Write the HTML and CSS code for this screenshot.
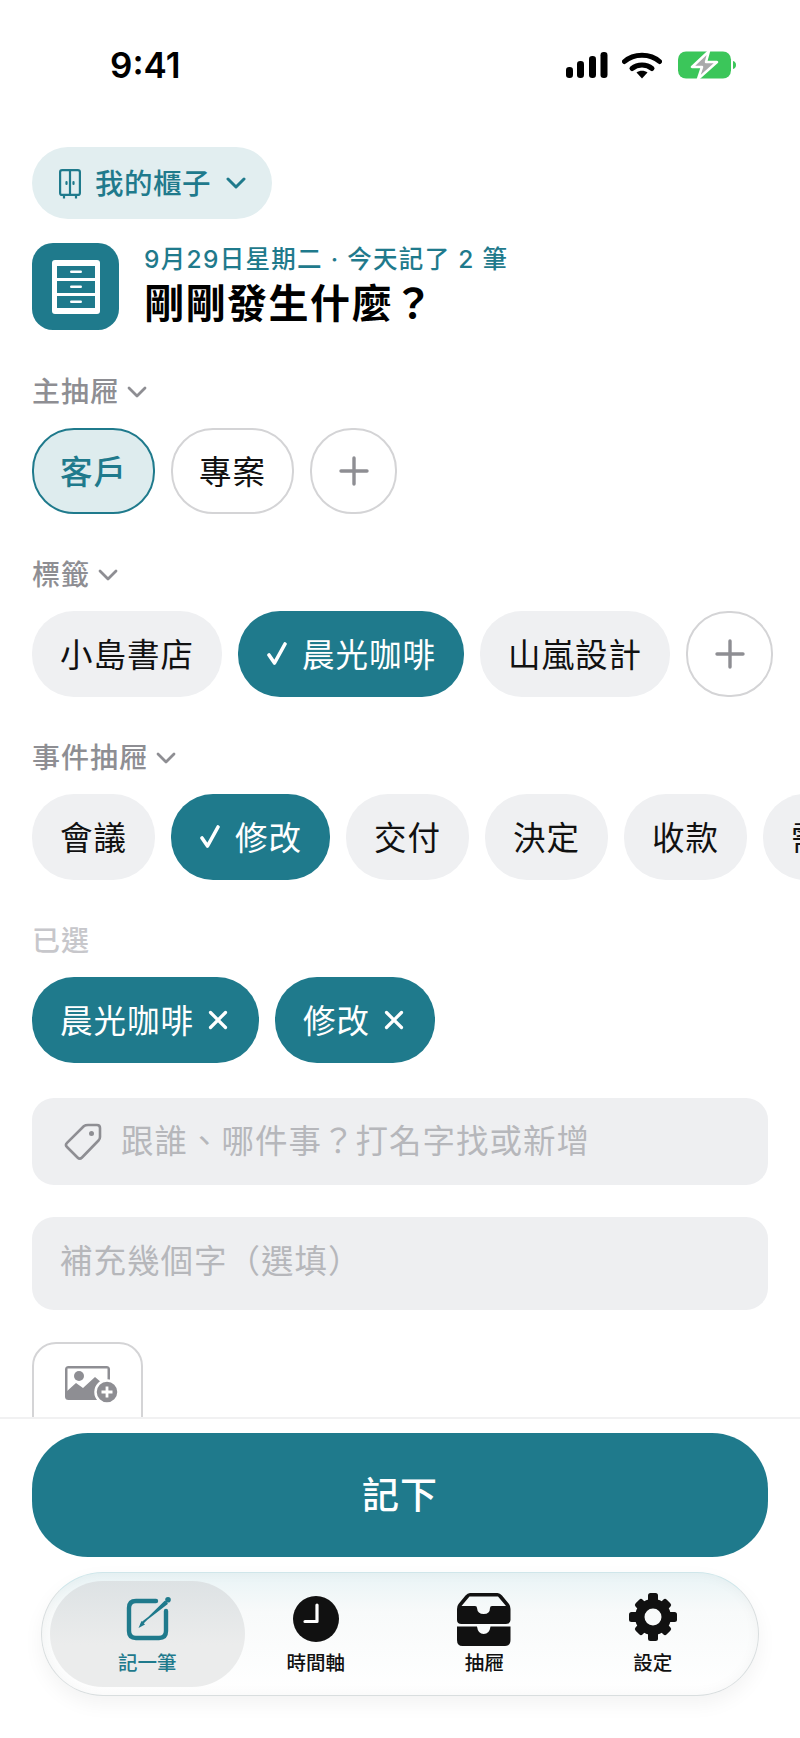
FILE: index.html
```html
<!DOCTYPE html>
<html lang="zh-Hant">
<head>
<meta charset="utf-8">
<title>記一筆</title>
<link rel="stylesheet" href="styles.css">
</head>
<body>
<div class="phone">

<div class="status">
	<span class="time">9:41</span>
	<div class="status-icons">
		<svg width="42" height="28" viewBox="0 0 42 28"><rect x="0" y="16" width="7" height="11" rx="3.2"/><rect x="11" y="10" width="7" height="17" rx="3.2"/><rect x="23" y="5" width="7" height="22" rx="3.2"/><rect x="34.500" y="1" width="7" height="26" rx="3.2"/></svg>
		<svg width="40" height="28" viewBox="0 0 40 28"><path d="M2.500 10.500C11.500 2 28.500 2 37.500 10.500" fill="none" stroke="#000" stroke-width="5" stroke-linecap="round"/><path d="M10 17.500C15.500 12.800 24.500 12.800 30 17.500" fill="none" stroke="#000" stroke-width="5" stroke-linecap="round"/><path d="M14.500 21.500C17.500 19 22.500 19 25.500 21.500L20 27.500Z"/></svg>
		<svg width="58" height="28" viewBox="0 0 58 28"><rect x="0" y="0.500" width="53" height="27" rx="8" fill="#3bc65a"/><path d="M55 10C57 10.500 58 12 58 14C58 16 57 17.500 55 18Z" fill="#3bc65a"/><path d="M31 0L14 16H24L20 28L39 11H28Z" fill="#a9a9ab" stroke="#fff" stroke-width="2.500" stroke-linejoin="round"/></svg>
	</div>
</div>

<div class="main">
	<div class="cabinet">
		<svg class="cabinet-icon" width="22" height="30" viewBox="0 0 22 30" fill="none" stroke="#1f7a8c" stroke-width="2.200"><rect x="1.100" y="1.100" width="19.800" height="24.800" rx="2"/><path d="M11 1V26M5 26V29.500M17 26V29.500"/><path d="M7.500 13V15M14.500 13V15" stroke-linecap="round"/></svg>
		<span>我的櫃子</span>
		<svg class="chev-big" width="20" height="12" viewBox="0 0 20 12" fill="none" stroke="#1f7a8c" stroke-width="3" stroke-linecap="round" stroke-linejoin="round"><path d="M2 2L10 10L18 2"/></svg>
	</div>

	<div class="head">
		<div class="head-icon">
			<svg width="48" height="54" viewBox="0 0 48 54"><rect width="48" height="54" rx="3" fill="#fff"/><rect x="5" y="6" width="38" height="12" fill="#1f7a8c"/><rect x="5" y="21" width="38" height="12" fill="#1f7a8c"/><rect x="5" y="36" width="38" height="12" fill="#1f7a8c"/><rect x="18" y="10.500" width="12" height="2.500" rx="1.200" fill="#fff"/><rect x="18" y="25.500" width="12" height="2.500" rx="1.200" fill="#fff"/><rect x="18" y="40.500" width="12" height="2.500" rx="1.200" fill="#fff"/></svg>
		</div>
		<div class="head-text">
			<div class="date">9月29日星期二 · 今天記了 2 筆</div>
			<h1>剛剛發生什麼？</h1>
		</div>
	</div>

	<div class="label first">主抽屜
		<svg width="20" height="12" viewBox="0 0 20 12" fill="none" stroke="#8e8e93" stroke-width="2.800" stroke-linecap="round" stroke-linejoin="round"><path d="M2 2L10 10L18 2"/></svg>
	</div>
	<div class="chips">
		<div class="chip picked">客戶</div>
		<div class="chip outline">專案</div>
		<div class="chip add"><svg width="30" height="30" viewBox="0 0 30 30" stroke="#8e8e93" stroke-width="3.400" stroke-linecap="round"><path d="M15 2V28M2 15H28"/></svg></div>
	</div>

	<div class="label">標籤
		<svg width="20" height="12" viewBox="0 0 20 12" fill="none" stroke="#8e8e93" stroke-width="2.800" stroke-linecap="round" stroke-linejoin="round"><path d="M2 2L10 10L18 2"/></svg>
	</div>
	<div class="chips">
		<div class="chip">小島書店</div>
		<div class="chip on"><svg class="check" width="23" height="24" viewBox="0 0 23 24" fill="none" stroke="#fff" stroke-width="3.600" stroke-linecap="round" stroke-linejoin="round"><path d="M3 13L8.500 21L19 2"/></svg>晨光咖啡</div>
		<div class="chip">山嵐設計</div>
		<div class="chip add"><svg width="30" height="30" viewBox="0 0 30 30" stroke="#8e8e93" stroke-width="3.400" stroke-linecap="round"><path d="M15 2V28M2 15H28"/></svg></div>
	</div>

	<div class="label">事件抽屜
		<svg width="20" height="12" viewBox="0 0 20 12" fill="none" stroke="#8e8e93" stroke-width="2.800" stroke-linecap="round" stroke-linejoin="round"><path d="M2 2L10 10L18 2"/></svg>
	</div>
	<div class="chips">
		<div class="chip">會議</div>
		<div class="chip on"><svg class="check" width="23" height="24" viewBox="0 0 23 24" fill="none" stroke="#fff" stroke-width="3.600" stroke-linecap="round" stroke-linejoin="round"><path d="M3 13L8.500 21L19 2"/></svg>修改</div>
		<div class="chip">交付</div>
		<div class="chip">決定</div>
		<div class="chip">收款</div>
		<div class="chip">需求</div>
	</div>

	<div class="label faint">已選</div>
	<div class="chips">
		<div class="chip on">晨光咖啡<svg class="cross" width="20" height="20" viewBox="0 0 20 20" stroke="#fff" stroke-width="3.200" stroke-linecap="round"><path d="M2.500 2.500L17.500 17.500M17.500 2.500L2.500 17.500"/></svg></div>
		<div class="chip on">修改<svg class="cross" width="20" height="20" viewBox="0 0 20 20" stroke="#fff" stroke-width="3.200" stroke-linecap="round"><path d="M2.500 2.500L17.500 17.500M17.500 2.500L2.500 17.500"/></svg></div>
	</div>

	<div class="field search">
		<svg width="38" height="38" viewBox="0 0 38 38" fill="none" stroke="#8e8e93" stroke-width="2.600" stroke-linejoin="round"><path d="M24 2H33C35 2 36 3 36 5V14C36 15.500 35.500 16.500 34.500 17.500L18 34.500C16.500 36 15 36 13.500 34.500L3 24C1.800 22.800 1.800 21 3 19.800L20 3C21.500 2 22.500 2 24 2Z"/><circle cx="27.500" cy="10.500" r="2.500" fill="#8e8e93" stroke="none"/></svg>
		<input type="text" placeholder="跟誰、哪件事？打名字找或新增">
	</div>
	<div class="field note">
		<input type="text" placeholder="補充幾個字（選填）">
	</div>

	<div class="photo">
		<svg width="54" height="38" viewBox="0 0 54 38"><rect x="1" y="1" width="45" height="34" rx="3.500" fill="#8e8e93"/><rect x="3.500" y="3.500" width="40" height="27" fill="#fff"/><circle cx="15" cy="11" r="5" fill="#8e8e93"/><path d="M2 27L12 18L19 23L31 12L45 24V34H2Z" fill="#8e8e93"/><circle cx="43" cy="27" r="11.500" fill="#8e8e93" stroke="#fff" stroke-width="2.500"/><path d="M43 21.500V32.500M37.500 27H48.500" stroke="#fff" stroke-width="2.800"/></svg>
	</div>
</div>

<div class="footer">
	<div class="save">記下</div>
	<div class="tabs">
		<div class="tab active">
			<svg class="pen" width="46" height="46" viewBox="0 0 46 46" fill="none"><path d="M30 5H10C5.500 5 3 7.500 3 12V35C3 39.500 5.500 42 10 42H33C37.500 42 40 39.500 40 35V15" stroke="#1f7a8c" stroke-width="4.400" stroke-linecap="round"/><path d="M15 29L39 5.500L41 7.500L17 26Z" fill="#1f7a8c" stroke="#1f7a8c" stroke-width="1.600" stroke-linejoin="round"/><path d="M12.500 32L15.500 25L19 28.500Z" fill="#1f7a8c"/><circle cx="42" cy="3.800" r="2.800" fill="#1f7a8c"/></svg>
			<span>記一筆</span>
		</div>
		<div class="tab">
			<svg width="46" height="46" viewBox="0 0 46 46"><circle cx="23" cy="23" r="23" fill="#111"/><path d="M24 9V25.500H12" fill="none" stroke="#fff" stroke-width="3.200" stroke-linecap="round" stroke-linejoin="round"/></svg>
			<span>時間軸</span>
		</div>
		<div class="tab">
			<svg class="drawer" width="54" height="53" viewBox="0 0 54 53"><path fill="#111" fill-rule="evenodd" d="M13 0H40.500Q43 0 45 2.500L52 11Q53.500 13 53.500 16V27Q53.500 31 49 31H4.500Q0 31 0 27V16Q0 13 1.500 11L8.500 2.500Q10.500 0 13 0ZM12.500 3.500L4.500 13H18Q20 13 20 15Q20.500 21 26.700 21Q33 21 33 15Q33 13 35 13H49L41 3.500Z"/><path fill="#111" d="M0 33.500H20Q21 41 26.700 41Q32.500 41 33.500 33.500H53.500V47Q53.500 53 48 53H5.500Q0 53 0 47Z"/></svg>
			<span>抽屜</span>
		</div>
		<div class="tab">
			<svg width="50" height="50" viewBox="0 0 50 50"><g fill="#111"><path fill-rule="evenodd" d="M25 7A18 18 0 1 0 25 43A18 18 0 1 0 25 7ZM25 16.500A8.500 8.500 0 1 1 25 33.500A8.500 8.500 0 1 1 25 16.500Z"/><rect x="20" y="1" width="10" height="10" rx="2.500"/><rect x="20" y="39" width="10" height="10" rx="2.500"/><rect x="1" y="20" width="10" height="10" rx="2.500"/><rect x="39" y="20" width="10" height="10" rx="2.500"/><rect x="20" y="3" width="10" height="10" rx="2.500" transform="rotate(45 25 25)"/><rect x="20" y="3" width="10" height="10" rx="2.500" transform="rotate(135 25 25)"/><rect x="20" y="3" width="10" height="10" rx="2.500" transform="rotate(225 25 25)"/><rect x="20" y="3" width="10" height="10" rx="2.500" transform="rotate(315 25 25)"/></g></svg>
			<span>設定</span>
		</div>
	</div>
</div>

</div>
</body>
</html>
```

FILE: styles.css
```css
* { box-sizing: border-box; }
html, body { margin: 0; padding: 0; background: #fff; }
body {
	font-family: "Inter", "Noto Sans CJK TC", sans-serif;
	color: #111;
	text-spacing-trim: space-all;
}
svg { display: block; flex: none; }

.phone {
	width: 800px;
	height: 1738px;
	display: flex;
	flex-direction: column;
	overflow: hidden;
}

/* status bar */
.status {
	height: 147px;
	flex: none;
	padding: 42px 64px 0 110px;
	display: flex;
	justify-content: space-between;
	align-items: flex-start;
}
.time { font-size: 35px; line-height: 46px; font-weight: 600; color: #000; }
.status-icons { display: flex; gap: 14px; margin-top: 9px; }
.status-icons svg:nth-child(3) { margin-left: 2px; }

/* main part */
.main {
	flex: 1;
	min-height: 0;
	overflow: hidden;
	padding: 0 0 0 32px;
}
.cabinet {
	width: 240px;
	height: 72px;
	border-radius: 36px;
	background: #e2eef0;
	color: #1f7a8c;
	display: flex;
	align-items: center;
	padding-left: 27px;
	font-size: 28.500px;
	letter-spacing: 0.500px;
	font-weight: 500;
}
.cabinet span { margin: 0 0 4px 14px; }
.cabinet-icon { margin-top: 2px; }
.chev-big { margin-left: 15px; }

.head { display: flex; align-items: center; gap: 25px; margin-top: 24px; }
.head-icon {
	width: 87px;
	height: 87px;
	border-radius: 21px;
	background: #1f7a8c;
	display: flex;
	align-items: center;
	justify-content: center;
	flex: none;
}
.date { font-size: 24.500px; line-height: 30px; font-weight: 500; color: #1f7a8c; letter-spacing: 1.300px; }
h1 { margin: 5px 0 0; font-size: 40px; line-height: 50px; font-weight: 600; letter-spacing: 1.500px; color: #000; }

.label {
	margin-top: 46px;
	height: 30px;
	display: flex;
	align-items: center;
	gap: 8px;
	font-size: 28px;
	letter-spacing: 1px;
	line-height: 30px;
	font-weight: 500;
	color: #8e8e93;
}
.label.first { margin-top: 47px; }
.label.faint { color: #c7c7cb; }

.chips { display: flex; gap: 16px; margin-top: 21px; width: 900px; }
.chip {
	height: 86px;
	padding: 0 28px 4px;
	border-radius: 42px;
	background: #eff0f2;
	display: flex;
	align-items: center;
	flex: none;
	font-size: 32.500px;
	letter-spacing: 1px;
	color: #111;
}
.chip svg { margin-top: 4px; }
.chip.picked { background: #deecee; border: 2px solid #1f7a8c; color: #1f7a8c; font-weight: 500; padding: 0 26px 4px; }
.chip.outline { background: #fff; border: 2px solid #d4d4d6; padding: 0 26px 4px; }
.chip.add { width: 87px; padding: 0 0 4px; background: #fff; border: 2px solid #d4d4d6; justify-content: center; }
.chip.on { background: #1f7a8c; color: #fff; }
.check { margin-right: 13px; }
.cross { margin-left: 14px; margin-right: 3px; }

.field {
	width: 736px;
	background: #eeeff1;
	border-radius: 22px;
	display: flex;
	align-items: center;
	padding: 0 28px;
}
.field.search { height: 87px; margin-top: 35px; gap: 19px; padding-left: 32px; }
.field.note { height: 93px; margin-top: 32px; padding-bottom: 4px; }
.field input {
	flex: 1;
	min-width: 0;
	border: 0;
	outline: 0;
	padding: 0;
	background: transparent;
	font: inherit;
	font-size: 32.500px;
	letter-spacing: 1px;
	color: #111;
}
.field input::placeholder { color: #b6b7bb; opacity: 1; }

.photo {
	width: 111px;
	height: 110px;
	margin-top: 32px;
	border: 2px solid #d4d4d6;
	border-radius: 24px;
	display: flex;
	padding: 21px 0 0 30px;
}

/* bottom part */
.footer {
	flex: none;
	height: 321px;
	background: #fff;
	border-top: 2px solid #f1f1f2;
	padding: 14px 32px 0;
}
.save {
	height: 124px;
	padding-bottom: 4px;
	border-radius: 56px;
	background: #1f7a8c;
	color: #fff;
	display: flex;
	align-items: center;
	justify-content: center;
	font-size: 37px;
	font-weight: 500;
	letter-spacing: 1px;
}
.tabs {
	margin: 15px 9px 0;
	height: 124px;
	border-radius: 62px;
	border: 1.500px solid #d9dedf;
	border-top-color: #cfe6ea;
	background: linear-gradient(#e9f4f6 0, #f8fafa 32%, #fff 100%);
	box-shadow: 0 8px 20px rgba(0, 0, 0, 0.05), inset 0 0 14px rgba(0, 0, 0, 0.04);
	padding: 8px 21px;
	display: grid;
	grid-template-columns: repeat(4, 1fr);
}
.tab {
	position: relative;
	display: flex;
	flex-direction: column;
	align-items: center;
	justify-content: flex-end;
	gap: 9px;
	font-size: 19.500px;
	line-height: 24px;
	font-weight: 500;
	padding-bottom: 12px;
}
.tab > * { position: relative; }
.tab .pen { left: 2px; }
.tab .drawer { top: 4px; }
.tab.active { color: #1f7a8c; }
.tab.active::before {
	content: "";
	position: absolute;
	top: 0;
	bottom: 0;
	left: -13px;
	right: -13px;
	border-radius: 53px;
	background: linear-gradient(#dde2e4, #ebecec 60%);
}
```
